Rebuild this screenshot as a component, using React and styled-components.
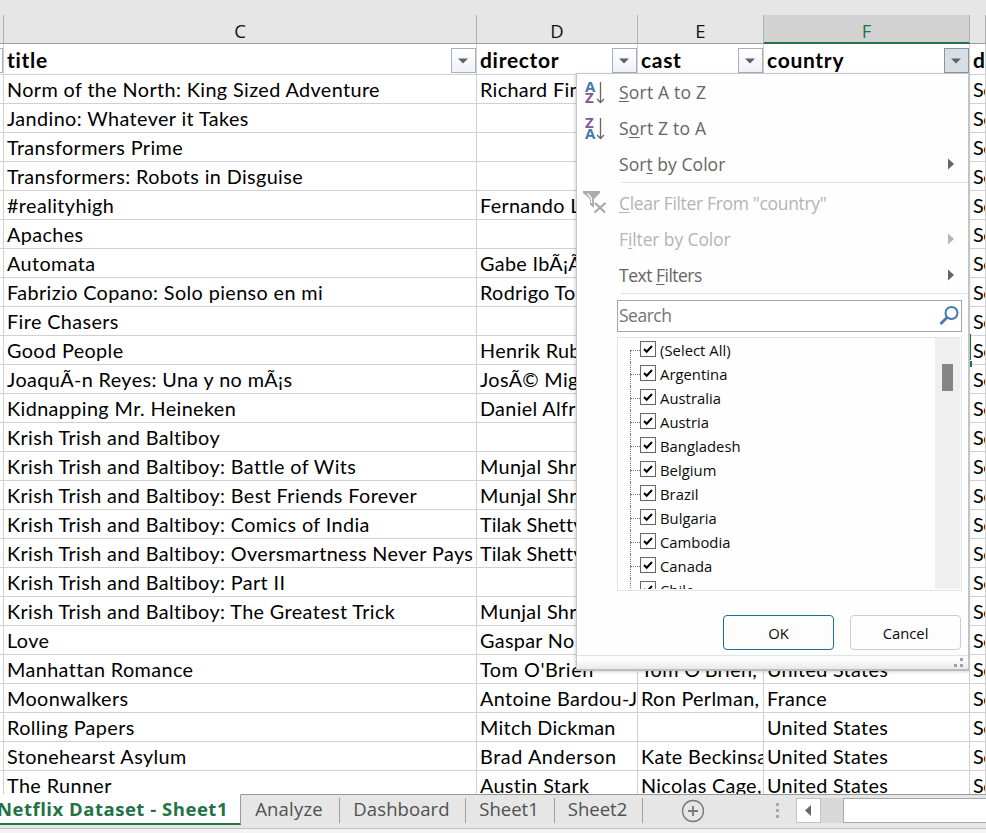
import React from "react";
import styled, { createGlobalStyle, css } from "styled-components";

const GlobalStyle = createGlobalStyle`
  * { box-sizing: border-box; }
  body { margin: 0; overflow: hidden; background: #fff; }
`;

const cellFont = `Lato, "Liberation Sans", sans-serif`;
const uiFont = `"Open Sans", "Noto Sans", sans-serif`;
const gridColumns = "4px 473px 161px 126px 206px 1fr";

const Page = styled.div`
  position: relative;
  width: 986px;
  height: 833px;
  overflow: hidden;
  display: flex;
  flex-direction: column;
  background: #e6e6e6;
  font-family: ${uiFont};
`;

const HeaderStrip = styled.div`
  display: grid;
  grid-template-columns: ${gridColumns};
  height: 44px;
  flex: none;
  padding-top: 15px;
`;

const ColumnHeader = styled.div`
  display: flex;
  justify-content: center;
  align-items: center;
  padding-top: ${(p) => (p.$selected ? "5px" : "4px")};
  line-height: 20px;
  font-size: 18.5px;
  color: ${(p) => (p.$selected ? "#217346" : "#111")};
  background: ${(p) => (p.$selected ? "#d2d2d2" : "transparent")};
  border-bottom: ${(p) => (p.$selected ? "2px solid #217346" : "1px solid #999")};
  border-right: 1px solid #b1b1b1;
`;

const Sheet = styled.div`
  height: 750px;
  flex: none;
  overflow: hidden;
  background: #fff;
`;

const SheetRow = styled.div`
  display: grid;
  grid-template-columns: ${gridColumns};
  height: ${(p) => (p.$header ? "31px" : "29px")};
`;

const Cell = styled.div`
  display: flex;
  align-items: center;
  min-width: 0;
  padding: ${(p) => (p.$header ? "0 0 0 3px" : "0 0 1px 3px")};
  overflow: hidden;
  white-space: pre;
  border-right: 1px solid #d0d0d0;
  border-bottom: 1px solid #d0d0d0;
  font-family: ${cellFont};
  font-size: ${(p) => (p.$header ? "21px" : "19.8px")};
  font-weight: ${(p) => (p.$header ? 700 : 400)};
  letter-spacing: ${(p) => p.$track ?? 0.33}px;
  color: #000;
`;

const FilterButton = styled.span`
  display: flex;
  align-items: center;
  justify-content: center;
  width: 25px;
  height: 25px;
  margin: 3px 0 0 auto;
  padding-right: 1px;
  flex: none;
  border: 1px solid ${(p) => (p.$active ? "#8d95a0" : "#a9b0ba")};
  background: ${(p) => (p.$active ? "#d9dde5" : "linear-gradient(#fff, #eef1f8)")};
`;

const CellEdge = styled.span`
  width: 3px;
  height: 25px;
  margin: 3px 0 0 -3px;
  border: 1px solid #a9b0ba;
  border-left: 0;
`;

const ActiveEdge = styled.div`
  position: absolute;
  left: 969px;
  top: 334px;
  width: 2px;
  height: 26px;
  background: #217346;
  &::after {
    content: "";
    position: absolute;
    left: 0;
    top: 27px;
    width: 3px;
    height: 6px;
    background: #217346;
  }
`;

const Popup = styled.div`
  position: absolute;
  left: 576px;
  top: 73px;
  width: 394px;
  height: 598px;
  display: flex;
  flex-direction: column;
  background: #fefefe;
  border: 1px solid #c6c6c6;
  border-right: 2px solid #c2c4c6;
  border-bottom: 2px solid #bcbcbc;
  box-shadow: -1px 1px 3px rgba(0, 0, 0, 0.18);
`;

const MenuItem = styled.div`
  display: grid;
  grid-template-columns: 42px 1fr 20px;
  align-items: center;
  height: 36px;
  flex: none;
  color: ${(p) => (p.$disabled ? "#b4b4b4" : "#656565")};
  font-size: 17.5px;
  letter-spacing: ${(p) => p.$track ?? -0.2}px;
  white-space: pre;
  u { text-underline-offset: 2px; text-decoration-thickness: 1px; }
`;

const MenuIcon = styled.svg`
  display: block;
  width: 26px;
  height: 28px;
  margin-left: 6px;
`;

const Separator = styled.div`
  height: 1px;
  flex: none;
  margin: 0 0 2px 44px;
  background: #dfe2e4;
`;

const SearchBox = styled.div`
  display: flex;
  align-items: center;
  justify-content: space-between;
  flex: none;
  width: 345px;
  height: 32px;
  margin: 4px 0 5px 40px;
  padding: 0 2px 2px 1px;
  border: 1px solid #a5a5a5;
  background: #fff;
  color: #737373;
  font-size: 17.5px;
  letter-spacing: -0.5px;
  svg { margin-top: 2px; }
`;

const TreeBox = styled.div`
  display: flex;
  flex: none;
  width: 345px;
  height: 254px;
  margin-left: 40px;
  overflow: hidden;
  border: 1px solid #e3e3e3;
`;

const Tree = styled.div`
  flex: 1;
  height: 251px;
  overflow: hidden;
  padding-left: 12px;
`;

const TreeRow = styled.div`
  display: flex;
  align-items: center;
  height: 24px;
  font-size: 14.8px;
  letter-spacing: 0.03px;
  color: #0a0a0a;
`;

const Branch = styled.span`
  align-self: stretch;
  position: relative;
  width: 10px;
  &::before {
    content: "";
    position: absolute;
    left: 0;
    top: ${(p) => (p.$first ? "12px" : "0")};
    bottom: 0;
    border-left: 1px dotted #777;
  }
  &::after {
    content: "";
    position: absolute;
    left: 0;
    right: 0;
    top: 12px;
    border-top: 1px dotted #777;
  }
`;

const Checkbox = styled.svg`
  width: 16px;
  height: 16px;
  margin: 0 4px 2px 0;
  flex: none;
`;

const ScrollTrack = styled.div`
  width: 25px;
  height: 251px;
  margin-right: 1px;
  padding: 26px 7px 0 7px;
  background: #efefef;
`;

const ScrollThumb = styled.div`
  width: 11px;
  height: 27px;
  background: #858585;
`;

const ButtonRow = styled.div`
  display: flex;
  gap: 16px;
  justify-content: flex-end;
  padding: 24px 7px 5px 0;
`;

const DialogButton = styled.button`
  width: 111px;
  height: 35px;
  padding: 1px 0 0;
  border: 1px solid ${(p) => (p.$primary ? "#1b6f9c" : "#cccccc")};
  border-radius: 4px;
  background: #fdfdfd;
  color: #0a0a0a;
  font-family: ${uiFont};
  font-size: 14.8px;
  letter-spacing: 0;
`;

const PopupFooter = styled.div`
  display: flex;
  justify-content: flex-end;
  flex: 1;
  padding: 2px 4px 0 0;
  border-top: 1px solid #dde4e8;
  background: linear-gradient(#fdfdfd 30%, #e8e8e8);
`;

const TabBar = styled.div`
  display: flex;
  flex: none;
  height: 35px;
  border-bottom: 1px solid #c2c2c2;
`;

const TabStripFooter = styled.div`
  flex: 1;
  background: #f3f3f3;
`;

const Tab = styled.div`
  display: flex;
  align-items: center;
  justify-content: center;
  flex: none;
  width: ${(p) => p.$width}px;
  border-top: 1px solid #9a9a9a;
  padding: 0 2px 6px 0;
  font-size: 18.5px;
  letter-spacing: ${(p) => p.$track ?? 0}px;
  white-space: pre;
  color: #505050;
  ${(p) =>
    p.$active &&
    css`
      height: 31px;
      border-top-color: #fff;
      border-right: 1px solid #9a9a9a;
      border-bottom: 2px solid #217346;
      background: #fff;
      color: #217346;
      font-weight: 700;
      padding: 0 12px 2px 0;
      justify-content: flex-end;
    `}
`;

const TabDivider = styled.span`
  width: 1px;
  flex: none;
  border-top: 1px solid #9a9a9a;
  padding: 3px 0 5px;
  background: #a0a0a0 content-box;
`;

const TabTools = styled.div`
  display: flex;
  flex: 1;
  border-top: 1px solid #9a9a9a;
  padding: 3px 0 0 38px;
`;

const AddIcon = styled.svg`
  width: 24px;
  height: 24px;
  margin-top: 1px;
`;

const Grip = styled.svg`
  width: 4px;
  height: 16px;
  margin: 5px 16px 0 71px;
`;

const ScrollArrow = styled.div`
  width: 25px;
  height: 25px;
  border: 1px solid #c4c4c4;
  background: #fff;
`;

const HorizontalTrack = styled.div`
  flex: 1;
  height: 25px;
  padding-left: 22px;
  background: #d8d8d8;
`;

const HorizontalThumb = styled.div`
  height: 25px;
  border: 1px solid #a8a8a8;
  border-right: 0;
  background: #fff;
`;

const rows = [
  ["Norm of the North: King Sized Adventure", "Richard Fin"],
  ["Jandino: Whatever it Takes", ""],
  ["Transformers Prime", ""],
  ["Transformers: Robots in Disguise", ""],
  ["#realityhigh", "Fernando L"],
  ["Apaches", ""],
  ["Automata", "Gabe IbÃ¡Ã"],
  ["Fabrizio Copano: Solo pienso en mi", "Rodrigo To"],
  ["Fire Chasers", ""],
  ["Good People", "Henrik Rub"],
  ["JoaquÃ-n Reyes: Una y no mÃ¡s", "JosÃ© Mig"],
  ["Kidnapping Mr. Heineken", "Daniel Alfr"],
  ["Krish Trish and Baltiboy", ""],
  ["Krish Trish and Baltiboy: Battle of Wits", "Munjal Shr"],
  ["Krish Trish and Baltiboy: Best Friends Forever", "Munjal Shr"],
  ["Krish Trish and Baltiboy: Comics of India", "Tilak Shetty", 0.1],
  ["Krish Trish and Baltiboy: Oversmartness Never Pays", "Tilak Shetty", 0.1],
  ["Krish Trish and Baltiboy: Part II", ""],
  ["Krish Trish and Baltiboy: The Greatest Trick", "Munjal Shr"],
  ["Love", "Gaspar No"],
  ["Manhattan Romance", "Tom O'Brien", 0.55, "Tom O'Brien, ", "United States"],
  ["Moonwalkers", "Antoine Bardou-J", 0.4, "Ron Perlman, ", "France"],
  ["Rolling Papers", "Mitch Dickman", 0.3, "", "United States"],
  ["Stonehearst Asylum", "Brad Anderson", 0.6, "Kate Beckinsa", "United States"],
  ["The Runner", "Austin Stark", 0.35, "Nicolas Cage, ", "United States"],
];

const countries = ["(Select All)", "Argentina", "Australia", "Austria", "Bangladesh", "Belgium", "Brazil", "Bulgaria", "Cambodia", "Canada", "Chile"];

const DropArrow = () => (
  <svg width="10" height="6" viewBox="0 0 10 6"><path d="M0 .5h10L5 5.5z" fill="#5f6165" /></svg>
);

const SortIcon = ({ reverse }) => (
  <MenuIcon viewBox="0 0 26 28">
    <g fontFamily="Open Sans" fontWeight="700" fontSize="15">
      <text x="2" y="13.5" fill={reverse ? "#8058a0" : "#4678ae"}>{reverse ? "Z" : "A"}</text>
      <text x="2" y="25" fill={reverse ? "#4678ae" : "#8058a0"}>{reverse ? "A" : "Z"}</text>
    </g>
    <path d="M17.5 4v20.5M14 21l3.5 3.5 3.5-3.5" fill="none" stroke="#666" strokeWidth="1.3" />
  </MenuIcon>
);

const ClearFilterIcon = () => (
  <MenuIcon viewBox="0 0 26 28">
    <path d="M0 2h17v2l-6 6v9l-4-3.5v-5.5L0 4z" fill="#ababab" />
    <path d="M4.5 4.5l4 4.5v5" fill="none" stroke="#fff" strokeWidth="1.2" />
    <path d="M12 14l10 9.5M22.5 14l-11 9.5" stroke="#a5a5a5" strokeWidth="2" />
  </MenuIcon>
);

const SubmenuArrow = () => (
  <svg width="7" height="12" viewBox="0 0 7 12"><path d="M0 .5l6 5.5-6 5.5z" fill="currentColor" /></svg>
);

const HeaderCell = ({ children, active }) => (
  <Cell $header $track={0.7}>
    {children}
    <FilterButton $active={active}><DropArrow /></FilterButton>
  </Cell>
);

const FilterPopup = () => (
  <Popup>
    <MenuItem $track={0.2}><SortIcon /><span><u>S</u>ort A to Z</span></MenuItem>
    <MenuItem $track={0.2}><SortIcon reverse /><span>S<u>o</u>rt Z to A</span></MenuItem>
    <MenuItem $track={0.05}><span /><span>Sor<u>t</u> by Color</span><SubmenuArrow /></MenuItem>
    <Separator />
    <MenuItem $disabled $track={-0.33}><ClearFilterIcon /><span><u>C</u>lear Filter From "country"</span></MenuItem>
    <MenuItem $disabled $track={-0.12}><span /><span>F<u>i</u>lter by Color</span><SubmenuArrow /></MenuItem>
    <MenuItem $track={-0.5}><span /><span>Text <u>F</u>ilters</span><SubmenuArrow /></MenuItem>
    <Separator />
    <SearchBox>
      Search
      <svg width="20" height="22" viewBox="0 0 20 22" fill="none" stroke="#4678ae">
        <circle cx="12.5" cy="8" r="6" strokeWidth="2" />
        <path d="M8 12.5l-6.5 6.5" strokeWidth="2.8" />
      </svg>
    </SearchBox>
    <TreeBox>
      <Tree>
        {countries.map((name, i) => (
          <TreeRow key={name}>
            <Branch $first={i === 0} />
            <Checkbox viewBox="0 0 16 16">
              <rect x=".5" y=".5" width="15" height="15" fill="#fff" stroke="#666" />
              <path d="M4 8l2.7 2.7L12 5" fill="none" stroke="#000" strokeWidth="2" />
            </Checkbox>
            {name}
          </TreeRow>
        ))}
      </Tree>
      <ScrollTrack><ScrollThumb /></ScrollTrack>
    </TreeBox>
    <ButtonRow>
      <DialogButton $primary>OK</DialogButton>
      <DialogButton>Cancel</DialogButton>
    </ButtonRow>
    <PopupFooter>
      <svg width="10" height="10" viewBox="0 0 10 10" fill="#a0a0a0">
        <path d="M6 0h3v3h-3zM0 6h3v3h-3zM6 6h3v3h-3z" />
      </svg>
    </PopupFooter>
  </Popup>
);

export default function App() {
  return (
    <Page>
      <GlobalStyle />
      <HeaderStrip>
        <ColumnHeader />
        <ColumnHeader>C</ColumnHeader>
        <ColumnHeader>D</ColumnHeader>
        <ColumnHeader>E</ColumnHeader>
        <ColumnHeader $selected>F</ColumnHeader>
        <ColumnHeader />
      </HeaderStrip>
      <Sheet>
        <SheetRow $header>
          <Cell $header><CellEdge /></Cell>
          <HeaderCell>title</HeaderCell>
          <HeaderCell>director</HeaderCell>
          <HeaderCell>cast</HeaderCell>
          <HeaderCell active>country</HeaderCell>
          <Cell $header>d</Cell>
        </SheetRow>
        {rows.map(([title, director, track, cast, country]) => (
          <SheetRow key={title}>
            <Cell />
            <Cell $track={0.4}>{title}</Cell>
            <Cell $track={track}>{director}</Cell>
            <Cell>{cast}</Cell>
            <Cell>{country}</Cell>
            <Cell $track={-0.5}>Se</Cell>
          </SheetRow>
        ))}
      </Sheet>
      <TabBar>
        <Tab $active $width={241} $track={0.52}>Netflix Dataset - Sheet1</Tab>
        <Tab $width={98} $track={0.2}>Analyze</Tab>
        <TabDivider />
        <Tab $width={125} $track={0.1}>Dashboard</Tab>
        <TabDivider />
        <Tab $width={88}>Sheet1</Tab>
        <TabDivider />
        <Tab $width={87}>Sheet2</Tab>
        <TabDivider />
        <TabTools>
          <AddIcon viewBox="0 0 24 24" fill="none" stroke="#777">
            <circle cx="12" cy="12" r="10.5" strokeWidth="1.3" />
            <path d="M12 7v10M7 12h10" strokeWidth="1.8" />
          </AddIcon>
          <Grip viewBox="0 0 4 16" fill="#a8a8a8"><path d="M0 0h3v3h-3zM0 6h3v3h-3zM0 12h3v3h-3z" /></Grip>
          <ScrollArrow>
            <svg width="23" height="23" viewBox="0 0 23 23"><path d="M14 6v11l-6-5.5z" fill="#666" /></svg>
          </ScrollArrow>
          <HorizontalTrack><HorizontalThumb /></HorizontalTrack>
        </TabTools>
      </TabBar>
      <TabStripFooter />
      <ActiveEdge />
      <FilterPopup />
    </Page>
  );
}
